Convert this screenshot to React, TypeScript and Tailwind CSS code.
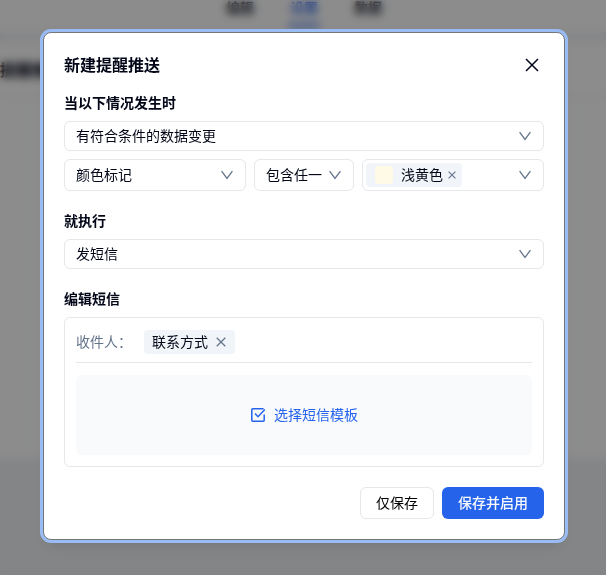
import { useState } from "react";
import type { ReactNode } from "react";

interface SelectFieldProps {
  label: string;
  options: string[];
  className?: string;
}

const navItems = [
  { label: "编辑", active: false },
  { label: "设置", active: true },
  { label: "数据", active: false },
];

function ChevronIcon() {
  return (
    <svg viewBox="0 0 12 12" className="size-3 shrink-0 text-[#64748b]" fill="none" stroke="currentColor" strokeWidth="1.3" aria-hidden="true">
      <path d="M0.6 2.2 6 9.5 11.4 2.2" />
    </svg>
  );
}

function CrossIcon({ className }: { className: string }) {
  return (
    <svg viewBox="0 0 14 14" className={className} fill="none" stroke="currentColor" aria-hidden="true">
      <path d="M1 1 13 13M13 1 1 13" />
    </svg>
  );
}

function TemplateIcon() {
  return (
    <svg viewBox="0 0 16 16" className="size-4" fill="none" stroke="currentColor" strokeWidth="1.5" aria-hidden="true">
      <path d="M14.2 7.5V13.3a.9.9 0 0 1-.9.9H2.7a.9.9 0 0 1-.9-.9V2.7a.9.9 0 0 1 .9-.9H13.6" />
      <path d="M5 6.6 8 9.7 14.8 2.6" />
    </svg>
  );
}

function SelectField({ label, options, className = "" }: SelectFieldProps) {
  return (
    <div className={`relative ${className}`}>
      <select
        aria-label={label}
        className="block h-full w-full appearance-none rounded-md border border-gray-200 bg-white pl-[11px] pr-7 text-sm text-[#020617] outline-none"
      >
        {options.map((option) => (
          <option key={option}>{option}</option>
        ))}
      </select>
      <span className="pointer-events-none absolute inset-y-0 right-[13px] flex items-center">
        <ChevronIcon />
      </span>
    </div>
  );
}

function Section({ title, children }: { title: string; children: ReactNode }) {
  return (
    <section>
      <h3 className="mb-2 text-sm leading-5 font-semibold">{title}</h3>
      {children}
    </section>
  );
}

function PageBehind() {
  return (
    <div className="flex min-h-screen flex-col bg-[#f1f3f6]" aria-hidden="true">
      <header className="flex h-8 justify-center gap-8 bg-white pl-0.5">
        {navItems.map((item) => (
          <span
            key={item.label}
            className={`h-[27px] w-8 border-b-3 text-center text-sm leading-4 font-medium ${
              item.active ? "border-[#2563eb] text-[#2563eb]" : "border-transparent text-[#020617]"
            }`}
          >
            {item.label}
          </span>
        ))}
      </header>
      <main className="mt-2.5 h-[416px] bg-white">
        <h1 className="h-14 overflow-hidden border-b border-gray-100 text-base leading-14 font-bold whitespace-nowrap">
          提醒推送
        </h1>
        <div className="mx-7 h-[360px] border-x border-gray-50" />
      </main>
    </div>
  );
}

export default function App() {
  const [color, setColor] = useState<string | null>("浅黄色");
  const [recipients, setRecipients] = useState(["联系方式"]);

  const removeRecipient = (name: string) => {
    setRecipients((prev) => prev.filter((item) => item !== name));
  };

  return (
    <div className="font-['Inter','Noto_Sans_CJK_SC',sans-serif] text-[#020617]">
      <PageBehind />

      {/* Overlay */}
      <div className="fixed inset-0 overflow-auto bg-black/45 pt-8 pl-0.5 backdrop-blur-xs">
        <div
          role="dialog"
          aria-modal="true"
          aria-labelledby="dialog-title"
          className="mx-auto flex w-full max-w-[522px] flex-col gap-5 rounded-lg border border-[#74767a] bg-white p-5 shadow-lg ring-3 ring-[#99bcf4]"
        >
          <div>
            <div className="mb-4 flex items-center justify-between">
              <h2 id="dialog-title" className="text-base leading-6 font-semibold">
                新建提醒推送
              </h2>
              <button type="button" aria-label="关闭" className="flex size-6 items-center justify-center">
                <CrossIcon className="size-3.5 stroke-[1.5]" />
              </button>
            </div>

            <Section title="当以下情况发生时">
              <SelectField label="触发条件" options={["有符合条件的数据变更"]} className="mb-2 h-[30px]" />
              <div className="grid h-8 grid-cols-[1fr_100px_1fr] gap-2">
                <SelectField label="字段" options={["颜色标记"]} />
                <SelectField label="匹配方式" options={["包含任一"]} />
                <div className="flex items-center justify-between rounded-md border border-gray-200 pr-3 pl-[3px]">
                  {color && (
                    <span className="flex h-6 items-center rounded bg-[#f1f5f9] pr-1 pl-[9px] text-sm">
                      <span className="mr-2 size-[18px] rounded bg-[#fefae6]" />
                      {color}
                      <button
                        type="button"
                        aria-label={`移除${color}`}
                        onClick={() => setColor(null)}
                        className="ml-[3px] flex size-3 items-center justify-center text-[#64748b]"
                      >
                        <CrossIcon className="size-2 stroke-2" />
                      </button>
                    </span>
                  )}
                  <button type="button" aria-label="选择颜色" onClick={() => setColor("浅黄色")} className="ml-auto">
                    <ChevronIcon />
                  </button>
                </div>
              </div>
            </Section>
          </div>

          <Section title="就执行">
            <SelectField label="执行动作" options={["发短信"]} className="h-[30px]" />
          </Section>

          <Section title="编辑短信">
            <div className="rounded-md border border-gray-200 px-[11px] pt-3 pb-[11px] text-sm">
              <div className="mb-3 flex items-center gap-3 border-b border-gray-200 pb-2">
                <span className="text-[#64748b]">收件人：</span>
                {recipients.map((name) => (
                  <span key={name} className="flex h-6 items-center gap-1.5 rounded bg-[#f1f5f9] pr-[7px] pl-2">
                    {name}
                    <button
                      type="button"
                      aria-label={`移除${name}`}
                      onClick={() => removeRecipient(name)}
                      className="flex size-3.5 items-center justify-center text-[#64748b]"
                    >
                      <CrossIcon className="size-2.5 stroke-[1.8]" />
                    </button>
                  </span>
                ))}
              </div>
              <button
                type="button"
                className="flex h-20 w-full items-center justify-center gap-2 rounded-md bg-[#f8fafc] text-[#2563eb]"
              >
                <TemplateIcon />
                选择短信模板
              </button>
            </div>
          </Section>

          {/* Actions */}
          <div className="flex justify-end gap-2 text-sm">
            <button type="button" className="h-8 rounded-md border border-gray-200 px-[15px] text-black">
              仅保存
            </button>
            <button type="button" className="h-8 rounded-md bg-[#2563eb] px-4 font-medium text-[#f8fafc]">
              保存并启用
            </button>
          </div>
        </div>
      </div>
    </div>
  );
}
